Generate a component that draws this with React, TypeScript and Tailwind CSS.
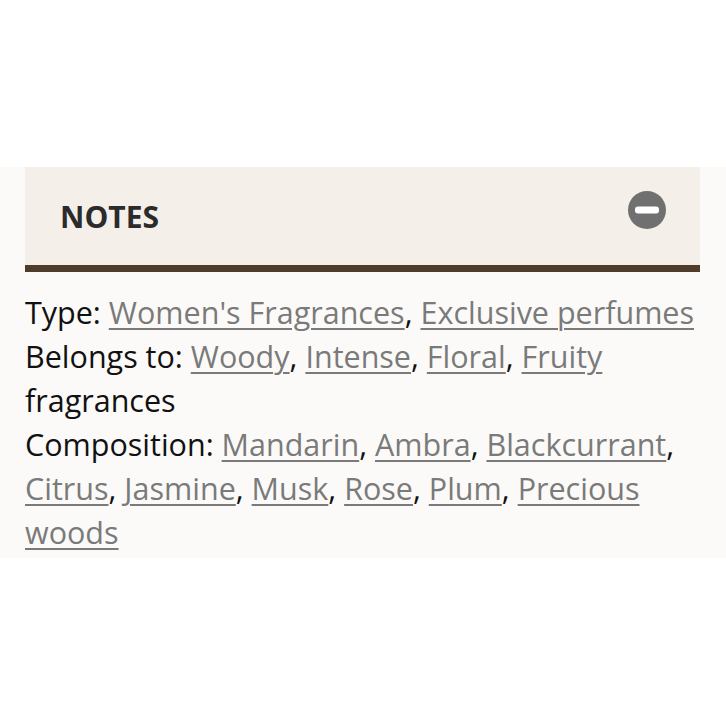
const Link = ({ children }: { children: React.ReactNode }) => (
  <a href="#" className="text-[#7a7a7a] underline decoration-[1.5px] underline-offset-[4px]">
    {children}
  </a>
)

const MinusCircle = () => (
  <svg width="38" height="38" viewBox="0 0 38 38" aria-hidden="true">
    <circle cx="19" cy="19" r="19" fill="#707070" />
    <rect x="7" y="15.5" width="24" height="7" rx="3" fill="#ffffff" />
  </svg>
)

export default function App() {
  const type = ["Women's Fragrances", 'Exclusive perfumes']
  const belongs = ['Woody', 'Intense', 'Floral', 'Fruity']
  const composition = ['Mandarin', 'Ambra', 'Blackcurrant', 'Citrus', 'Jasmine', 'Musk', 'Rose', 'Plum', 'Precious woods']

  const list = (items: string[]) =>
    items.map((item, i) => (
      <span key={item}>
        <Link>{item}</Link>
        {i < items.length - 1 ? ', ' : ''}
      </span>
    ))

  return (
    <div className="min-h-[726px] bg-white pt-[167px] font-['Open_Sans',sans-serif]">
      <section className="bg-[#fbfaf8] pb-[4px]">
        <div className="ml-[25px] w-[675px]">
          <div className="flex h-[105px] items-center justify-between border-b-[7px] border-[#4f3c2b] bg-[#f4efe8] pl-[35px] pr-[34px]">
            <h3 className="mt-[2px] text-[30px] font-bold leading-none text-[#2b2b2b]">NOTES</h3>
            <div className="-mt-[12px]">
              <MinusCircle />
            </div>
          </div>
          <div className="mt-[18px] text-[30.5px] leading-[44px] text-[#111111]">
            <p>Type: {list(type)}</p>
            <p>
              Belongs to: {list(belongs)} fragrances
            </p>
            <p>Composition: {list(composition)}</p>
          </div>
        </div>
      </section>
    </div>
  )
}
